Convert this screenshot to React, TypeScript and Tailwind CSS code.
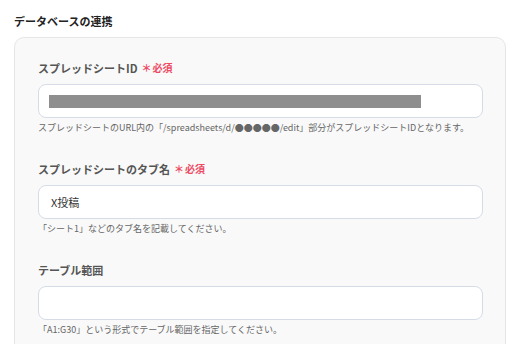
import type { ReactNode } from 'react';

function Required() {
  return (
    <span className="ml-[4px] inline-flex items-center text-[#ee4a63] font-bold">
      <span className="text-[10px] leading-none">＊</span>
      <span className="ml-[1px] text-[10px] leading-none">必須</span>
    </span>
  );
}

function Field({
  label,
  required,
  help,
  children,
  first,
}: {
  label: string;
  required?: boolean;
  help: string;
  children?: ReactNode;
  first?: boolean;
}) {
  return (
    <div className={first ? '' : 'mt-[27px]'}>
      <div className="flex items-center text-[11px] leading-[16px] font-bold text-[#555]">
        {label}
        {required && <Required />}
      </div>
      <div className="mt-[8px] flex h-[34px] items-center rounded-[8px] border border-[#d6dce6] bg-white px-[10px]">
        {children}
      </div>
      <p className="mt-[4px] text-[9px] leading-[12px] text-[#666]">{help}</p>
    </div>
  );
}

export default function App() {
  return (
    <div className="h-[344px] overflow-hidden bg-white pl-[14px] pr-[6px] pt-[13px] font-['Noto_Sans_CJK_JP','Noto_Sans',sans-serif]">
      <h2 className="text-[11px] leading-[16px] font-bold text-[#222]">データベースの連携</h2>

      {/* カード */}
      <div className="mt-[8px] h-[400px] rounded-[10px] border border-[#e6e6e6] bg-[#f9f9f9] pl-[23px] pr-[22px] pt-[22px]">
        <Field
          first
          label="スプレッドシートID"
          required
          help="スプレッドシートのURL内の「/spreadsheets/d/●●●●●/edit」部分がスプレッドシートIDとなります。"
        >
          <div className="h-[13px] w-[372px] bg-[#8e8e8e]" />
        </Field>

        <Field
          label="スプレッドシートのタブ名"
          required
          help="「シート1」などのタブ名を記載してください。"
        >
          <span className="pl-[2px] text-[11px] text-[#333]">X投稿</span>
        </Field>

        <Field
          label="テーブル範囲"
          help="「A1:G30」という形式でテーブル範囲を指定してください。"
        />
      </div>
    </div>
  );
}
